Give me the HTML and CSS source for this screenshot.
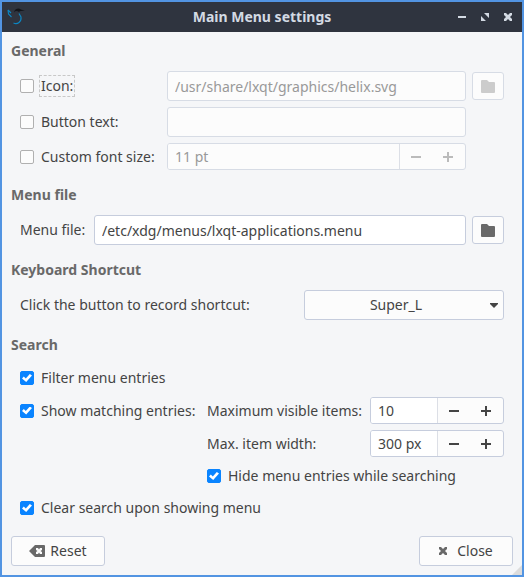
FILE: index.html
```html
<!DOCTYPE html>
<html lang="en">
<head>
<meta charset="utf-8">
<title>Main Menu settings</title>
<link rel="stylesheet" href="styles.css">
</head>
<body>
<svg class="defs" aria-hidden="true">
  <symbol id="folder" viewBox="0 0 14 13"><path d="M0 1 Q0 0 1 0H6L8 2H13Q14 2 14 3V12Q14 13 13 13H1Q0 13 0 12Z"/></symbol>
  <symbol id="minus" viewBox="0 0 10 10"><path d="M0 4H10V6H0Z"/></symbol>
  <symbol id="plus" viewBox="0 0 10 10"><path d="M0 4H4V0H6V4H10V6H6V10H4V6H0Z"/></symbol>
  <symbol id="cross" viewBox="0 0 8 8"><path d="M0 0H2L4 2L6 0H8V2L6 4L8 6V8H6L4 6L2 8H0V6L2 4L0 2Z"/></symbol>
</svg>
<div class="window">
  <header class="titlebar">
    <svg class="logo" viewBox="0 0 18 18" aria-hidden="true">
      <path d="M7 4.500Q7.500 0.500 12 0.500Q14 2 18 2.500Q13 2.500 12 4Q9 2 7 4.500Z" fill="#14161b"/>
      <path d="M1 2L1.500 6L4.500 9M1 2L4 5M12 5.500L14 9Q14.500 12.500 12 14.500Q9.500 16.500 6.500 15" fill="none" stroke="#0b86c4" stroke-width="1.100"/>
    </svg>
    <h1>Main Menu settings</h1>
    <div class="window-buttons">
      <button type="button" aria-label="Minimize"><svg viewBox="0 0 8 8"><path d="M0 3H8V5H0Z"/></svg></button>
      <button type="button" aria-label="Maximize"><svg viewBox="0 0 8 8"><path d="M3 0H8V5ZM0 3L5 8H0Z"/></svg></button>
      <button type="button" aria-label="Close window"><svg><use href="#cross"/></svg></button>
    </div>
  </header>
  <main class="content">
    <section>
      <h2>General</h2>
      <div class="fields general">
        <label class="check"><input type="checkbox"><span class="focused">Icon:</span></label>
        <input class="text" type="text" aria-label="Icon path" value="/usr/share/lxqt/graphics/helix.svg" disabled>
        <button class="browse" type="button" aria-label="Choose icon" disabled><svg><use href="#folder"/></svg></button>
        <label class="check"><input type="checkbox"><span>Button text:</span></label>
        <input class="text" type="text" aria-label="Button text" disabled>
        <label class="check"><input type="checkbox"><span>Custom font size:</span></label>
        <div class="spin off">
          <input type="text" aria-label="Font size" value="11 pt" disabled>
          <button type="button" aria-label="Decrease font size" disabled><svg><use href="#minus"/></svg></button>
          <button type="button" aria-label="Increase font size" disabled><svg><use href="#plus"/></svg></button>
        </div>
      </div>
    </section>
    <section>
      <h2>Menu file</h2>
      <div class="fields line">
        <label class="file-label" for="menu-file">Menu file:</label>
        <input class="text" id="menu-file" type="text" value="/etc/xdg/menus/lxqt-applications.menu">
        <button class="browse" type="button" aria-label="Choose menu file"><svg><use href="#folder"/></svg></button>
      </div>
    </section>
    <section>
      <h2>Keyboard Shortcut</h2>
      <div class="fields line spread">
        <label for="shortcut">Click the button to record shortcut:</label>
        <div class="select">
          <select id="shortcut"><option>Super_L</option></select>
          <svg viewBox="0 0 8 5" aria-hidden="true"><path d="M0 0H8V1L4 5L0 1Z"/></svg>
        </div>
      </div>
    </section>
    <section>
      <h2>Search</h2>
      <div class="fields search">
        <label class="check wide"><input type="checkbox" checked><span>Filter menu entries</span></label>
        <label class="check"><input type="checkbox" checked><span>Show matching entries:</span></label>
        <label for="max-items">Maximum visible items:</label>
        <div class="spin">
          <input id="max-items" type="text" value="10">
          <button type="button" aria-label="Fewer items"><svg><use href="#minus"/></svg></button>
          <button type="button" aria-label="More items"><svg><use href="#plus"/></svg></button>
        </div>
        <label class="nested" for="max-width">Max. item width:</label>
        <div class="spin">
          <input id="max-width" type="text" value="300 px">
          <button type="button" aria-label="Narrower"><svg><use href="#minus"/></svg></button>
          <button type="button" aria-label="Wider"><svg><use href="#plus"/></svg></button>
        </div>
        <label class="check nested-wide"><input type="checkbox" checked><span>Hide menu entries while searching</span></label>
        <label class="check wide"><input type="checkbox" checked><span>Clear search upon showing menu</span></label>
      </div>
    </section>
    <footer>
      <button class="action" type="button"><svg class="reset-icon" viewBox="0 0 16 12"><path fill-rule="evenodd" d="M6 0H15Q16 0 16 1V11Q16 12 15 12H6L0 6ZM7 3V5L8.500 6L7 7V9H9L10 7.500L11 9H13V7L11.500 6L13 5V3H11L10 4.500L9 3Z"/></svg>Reset</button>
      <button class="action close" type="button"><svg class="close-icon"><use href="#cross"/></svg>Close</button>
    </footer>
  </main>
  <span class="grip"></span>
</div>
</body>
</html>
```
FILE: styles.css
```css
* {
  box-sizing: border-box;
}

body {
  margin: 0;
  font: 14px/20px "Noto Sans", "Open Sans", sans-serif;
  color: #444;
}

button,
input,
select {
  font: inherit;
  color: inherit;
  margin: 0;
}

svg {
  fill: currentColor;
  display: block;
}

.defs {
  display: none;
}

.window {
  position: relative;
  min-height: 100vh;
  border: 2px solid #5294e2;
  background: #f5f6f8;
}

.titlebar {
  display: grid;
  grid-template-columns: 80px 1fr 80px;
  align-items: center;
  height: 30px;
  background: #2f343f;
  color: #d3dae3;
}

.logo {
  width: 18px;
  height: 18px;
  margin-left: 5px;
}

h1 {
  margin: 0;
  font-size: 14px;
  line-height: 20px;
  font-weight: 700;
  text-align: center;
}

.window-buttons {
  display: flex;
  justify-content: flex-end;
  gap: 7px;
  padding-right: 6px;
}

.window-buttons button {
  display: grid;
  place-items: center;
  width: 16px;
  height: 16px;
  padding: 0;
  border: 0;
  background: none;
}

.window-buttons svg,
.close-icon {
  width: 8px;
  height: 8px;
}

.content {
  display: flex;
  flex-direction: column;
  gap: 15px;
  padding: 9px;
}

h2 {
  margin: 0 0 10px;
  font-size: 14px;
  line-height: 20px;
  font-weight: 700;
  color: #696969;
}

.fields {
  padding: 0 9px;
}

.general {
  display: grid;
  grid-template-columns: 141px 1fr 32px;
  gap: 6px;
  align-items: center;
}

.general .check {
  grid-column: 1;
}

.line {
  display: flex;
  align-items: center;
  gap: 6px;
}

.file-label {
  min-width: 68px;
}

.spread {
  justify-content: space-between;
}

.search {
  display: grid;
  grid-template-columns: 181px 1fr 134px;
  gap: 6px;
  align-items: center;
}

.wide {
  grid-column: 1 / -1;
}

.nested {
  grid-column: 2;
}

.nested-wide {
  grid-column: 2 / -1;
}

label {
  white-space: nowrap;
}

.check {
  display: flex;
  align-items: center;
  gap: 5px;
  min-height: 26px;
}

.check span {
  padding: 0 1px;
  border: 1px solid transparent;
}

.check .focused {
  border: 1px dashed #c8c8c8;
}

.check input {
  appearance: none;
  display: grid;
  place-items: center;
  width: 14px;
  height: 14px;
  border: 1px solid #b0b0b0;
  border-radius: 2px;
  background: #fcfcfc;
}

.check input:checked {
  border-color: #0a84ff;
  background: #0a84ff;
}

.check input:checked::after {
  content: "";
  width: 10px;
  height: 8px;
  background: #fff;
  clip-path: polygon(0 55%, 18% 32%, 38% 55%, 78% 0, 100% 18%, 42% 100%);
}

.text,
.browse,
.spin,
.select select,
.action {
  border: 1px solid #c6cddd;
  border-radius: 3px;
  background: #fcfcfc;
}

.text {
  flex: 1;
  width: 100%;
  min-width: 0;
  height: 30px;
  padding: 0 7px;
  background: #fff;
}

.text:disabled {
  border-color: #d7dce5;
  background: #fcfcfc;
  color: #999;
}

.browse {
  display: grid;
  place-items: center;
  width: 32px;
  height: 28px;
  padding: 0;
  color: #696969;
}

.browse svg {
  width: 14px;
  height: 13px;
}

.browse:disabled {
  border-color: #d7dce5;
  color: #ccc;
}

.spin {
  display: flex;
  height: 27px;
  padding-right: 1px;
  overflow: hidden;
}

.spin input {
  flex: 1;
  min-width: 0;
  padding: 0 7px;
  border: 0;
  border-right: 1px solid #dcdfe6;
  background: #fff;
}

.spin button {
  display: grid;
  place-items: center;
  width: 32px;
  padding: 0;
  border: 0;
  background: none;
}

.spin svg {
  width: 10px;
  height: 10px;
}

.spin.off {
  border-color: #d7dce5;
}

.off button {
  color: #bbb;
}

.off input {
  background: #fcfcfc;
  color: #999;
}

.select {
  position: relative;
  width: 200px;
}

.select select {
  appearance: none;
  display: block;
  width: 100%;
  height: 30px;
  padding: 0 20px 0 4px;
  text-align: center;
  text-align-last: center;
}

.select svg {
  position: absolute;
  top: 13px;
  right: 6px;
  width: 8px;
  height: 5px;
  pointer-events: none;
}

footer {
  display: flex;
  justify-content: space-between;
}

.action {
  display: flex;
  align-items: center;
  justify-content: center;
  gap: 5px;
  width: 94px;
  height: 30px;
  padding: 0;
}

.close {
  gap: 10px;
}

.action svg {
  color: #696969;
}

.reset-icon {
  width: 16px;
  height: 12px;
}

.grip {
  position: absolute;
  right: 0;
  bottom: 0;
  width: 10px;
  height: 10px;
  background: #dcdcdc;
  clip-path: polygon(100% 0, 100% 100%, 0 100%);
}
```
